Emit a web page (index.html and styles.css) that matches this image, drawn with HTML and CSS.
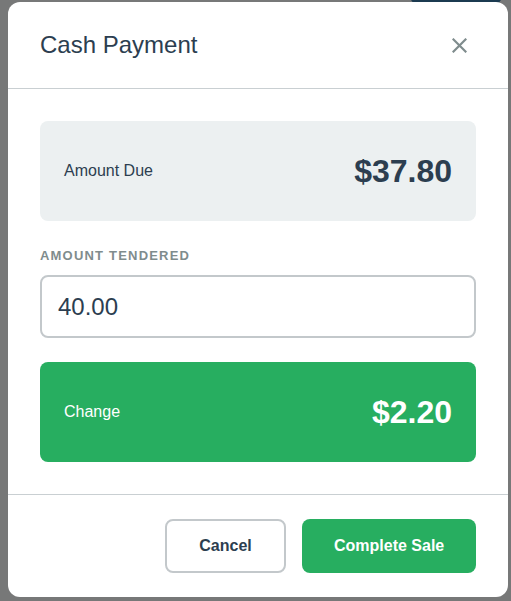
FILE: index.html
```html
<!DOCTYPE html>
<html lang="en">
<head>
<meta charset="utf-8">
<title>Cash Payment</title>
<link rel="stylesheet" href="styles.css">
</head>
<body>
<div class="backdrop-item"></div>
<div class="overlay">
  <div class="modal">
    <div class="modal-header">
      <h2 class="modal-title">Cash Payment</h2>
      <button class="close-btn" aria-label="Close">
        <svg width="15" height="15" viewBox="0 0 15 15"><path d="M1.5 1.5 L13.5 13.5 M13.5 1.5 L1.5 13.5" stroke="#7f8c8d" stroke-width="2.2" stroke-linecap="square" fill="none"/></svg>
      </button>
    </div>
    <div class="modal-body">
      <div class="summary summary-due">
        <span class="summary-label">Amount Due</span>
        <span class="summary-value">$37.80</span>
      </div>
      <label class="field-label" for="tendered">Amount Tendered</label>
      <input class="field-input" id="tendered" type="text" value="40.00">
      <div class="summary summary-change">
        <span class="summary-label">Change</span>
        <span class="summary-value">$2.20</span>
      </div>
    </div>
    <div class="modal-footer">
      <button class="btn btn-secondary">Cancel</button>
      <button class="btn btn-primary">Complete Sale</button>
    </div>
  </div>
</div>
</body>
</html>
```
FILE: styles.css
```css
* { box-sizing: border-box; }
html, body {
  margin: 0;
  padding: 0;
  height: 100%;
}
body {
  background: #777878;
  font-family: "Liberation Sans", Arial, sans-serif;
  color: #2c3e50;
  overflow: hidden;
  position: relative;
}
.backdrop-item {
  position: absolute;
  left: 410px;
  top: -20px;
  width: 92px;
  height: 24px;
  border-radius: 8px;
  background: #1b3a50;
}
.overlay {
  position: relative;
  display: flex;
  padding: 2px 0 0 8px;
}
.modal {
  width: 500px;
  height: 595px;
  background: #ffffff;
  border-radius: 12px;
  display: flex;
  flex-direction: column;
}
.modal-header {
  display: flex;
  align-items: center;
  justify-content: space-between;
  padding: 28px 32px;
  border-bottom: 1px solid #c9cfd2;
}
.modal-title {
  margin: 0;
  font-size: 24px;
  font-weight: 400;
  line-height: 30px;
  color: #2c3e50;
}
.close-btn {
  width: 34px;
  height: 30px;
  border: 0;
  padding: 0;
  background: transparent;
  display: flex;
  align-items: center;
  justify-content: center;
}
.modal-body {
  padding: 32px 32px 32px;
  display: flex;
  flex-direction: column;
  border-bottom: 1px solid #c9cfd2;
}
.summary {
  height: 100px;
  border-radius: 8px;
  padding: 0 24px;
  display: flex;
  align-items: center;
  justify-content: space-between;
}
.summary-due {
  background: #ecf0f1;
  color: #2c3e50;
  margin-bottom: 25px;
}
.summary-change {
  background: #27ae60;
  color: #ffffff;
  margin-top: 24px;
}
.summary-label {
  font-size: 16px;
}
.summary-value {
  font-size: 32px;
  font-weight: 700;
}
.field-label {
  font-size: 13px;
  font-weight: 700;
  text-transform: uppercase;
  letter-spacing: 1.2px;
  color: #7f8c8d;
  line-height: 20px;
  margin-bottom: 9px;
}
.field-input {
  height: 63px;
  width: 100%;
  border: 2px solid #c3c8cb;
  border-radius: 8px;
  padding: 0 16px;
  font-family: "Liberation Sans", Arial, sans-serif;
  font-size: 24px;
  color: #2c3e50;
  background: #ffffff;
  outline: none;
}
.modal-footer {
  display: flex;
  justify-content: flex-end;
  gap: 16px;
  padding: 24px 32px;
}
.btn {
  height: 54px;
  border-radius: 8px;
  padding: 0 32px;
  font-family: "Liberation Sans", Arial, sans-serif;
  font-size: 16px;
  font-weight: 700;
  white-space: nowrap;
}
.btn-secondary {
  background: #ffffff;
  border: 2px solid #c3c8cb;
  color: #2c3e50;
  width: 121px;
}
.btn-primary {
  background: #27ae60;
  border: 0;
  color: #ffffff;
  width: 174px;
}
```
